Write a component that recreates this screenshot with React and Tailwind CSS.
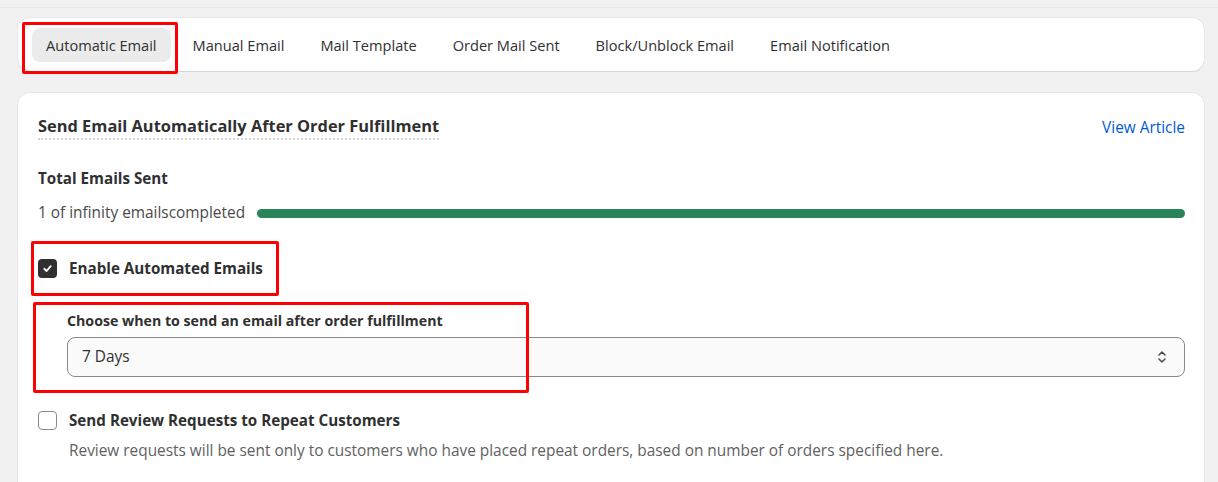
import React from "react";

const font = { fontFamily: '"Open Sans", "Noto Sans", sans-serif' };

function Chevrons() {
  return (
    <svg width="12" height="16" viewBox="0 0 12 16" fill="none" stroke="#4a4a4a" strokeWidth="1.5" strokeLinecap="round" strokeLinejoin="round">
      <path d="M3 6 L6 3 L9 6" />
      <path d="M3 10 L6 13 L9 10" />
    </svg>
  );
}

export default function App() {
  const tabs = ["Automatic Email", "Manual Email", "Mail Template", "Order Mail Sent", "Block/Unblock Email", "Email Notification"];
  return (
    <div className="min-h-screen bg-[#f1f1f1] text-[#303030]" style={font}>
      <div className="h-[8px] border-b border-[#e6e6e6]" />
      <div className="pl-[18px] pr-[14px] pt-[10px]">
        {/* Tabs card */}
        <div className="relative h-[53px] bg-white rounded-xl shadow-[0_1px_0_0_#d4d4d4,0_0_0_1px_#e8e8e8] flex items-center pl-[14px] gap-2">
          {tabs.map((t, i) => (
            <div
              key={t}
              className={
                "h-[34px] px-[14px] pt-[2px] flex items-center rounded-lg text-[14.6px] font-medium " +
                (i === 0 ? "bg-[#ebebeb] text-[#303030]" : "text-[#303030]")
              }
            >
              {t}
            </div>
          ))}
          <div className="absolute left-[4px] top-[4px] w-[156px] h-[52px] border-[3px] border-[#ff0000] rounded-[2px] pointer-events-none" />
        </div>

        {/* Main card */}
        <div className="relative mt-[22px] bg-white rounded-t-xl shadow-[0_0_0_1px_#e6e6e6] pl-5 pr-[19px] pt-[22px] pb-6">
          <div className="flex items-start justify-between">
            <div className="text-[16.4px] font-bold leading-[22px] border-b-2 border-dotted border-[#d6d6d6] pb-[1px]">
              Send Email Automatically After Order Fulfillment
            </div>
            <div className="text-[15.4px] text-[#005bd3] leading-[20px] mt-[3px]">View Article</div>
          </div>

          <div className="mt-[28px] text-[15.2px] font-bold leading-[20px]">Total Emails Sent</div>

          <div className="mt-[15px] flex items-center gap-3">
            <div className="text-[15.4px] leading-[20px] text-[#4a4a4a] whitespace-nowrap">1 of infinity emailscompleted</div>
            <div className="flex-1 h-[9px] rounded-full bg-[#29845a]" />
          </div>

          <div className="relative mt-[35px] flex items-center gap-3 h-[20px]">
            <div className="w-[19px] h-[19px] rounded-[4px] bg-[#303030] flex items-center justify-center">
              <svg width="11" height="11" viewBox="0 0 12 12" fill="none" stroke="white" strokeWidth="2" strokeLinecap="round" strokeLinejoin="round">
                <path d="M2.5 6.3 L5 8.7 L9.5 3.5" />
              </svg>
            </div>
            <div className="text-[15.2px] font-bold leading-[20px]">Enable Automated Emails</div>
            <div className="absolute left-[-7px] top-[-17px] w-[248px] h-[55px] border-[3px] border-[#ff0000] rounded-[2px] pointer-events-none" />
          </div>

          <div className="relative mt-[33px] pl-[29px]">
            <div className="text-[14.2px] font-bold leading-[20px]">Choose when to send an email after order fulfillment</div>
            <div className="mt-[6px] h-[40px] rounded-lg border border-[#8a8a8a] bg-[#fafafa] flex items-center justify-between pl-[14px] pr-[16px]">
              <span className="text-[15.4px] text-[#303030]">7 Days</span>
              <Chevrons />
            </div>
            <div className="absolute left-[-5px] top-[-9px] w-[496px] h-[91px] border-[3px] border-[#ff0000] rounded-[2px] pointer-events-none" />
          </div>

          <div className="mt-[33px] flex items-center gap-3 h-[20px]">
            <div className="w-[19px] h-[19px] rounded-[4px] border border-[#8a8a8a] bg-white" />
            <div className="text-[15.2px] font-bold leading-[20px]">Send Review Requests to Repeat Customers</div>
          </div>
          <div className="mt-[11px] pl-[31px] text-[15.4px] leading-[20px] text-[#616161]">
            Review requests will be sent only to customers who have placed repeat orders, based on number of orders specified here.
          </div>
        </div>
      </div>
    </div>
  );
}
